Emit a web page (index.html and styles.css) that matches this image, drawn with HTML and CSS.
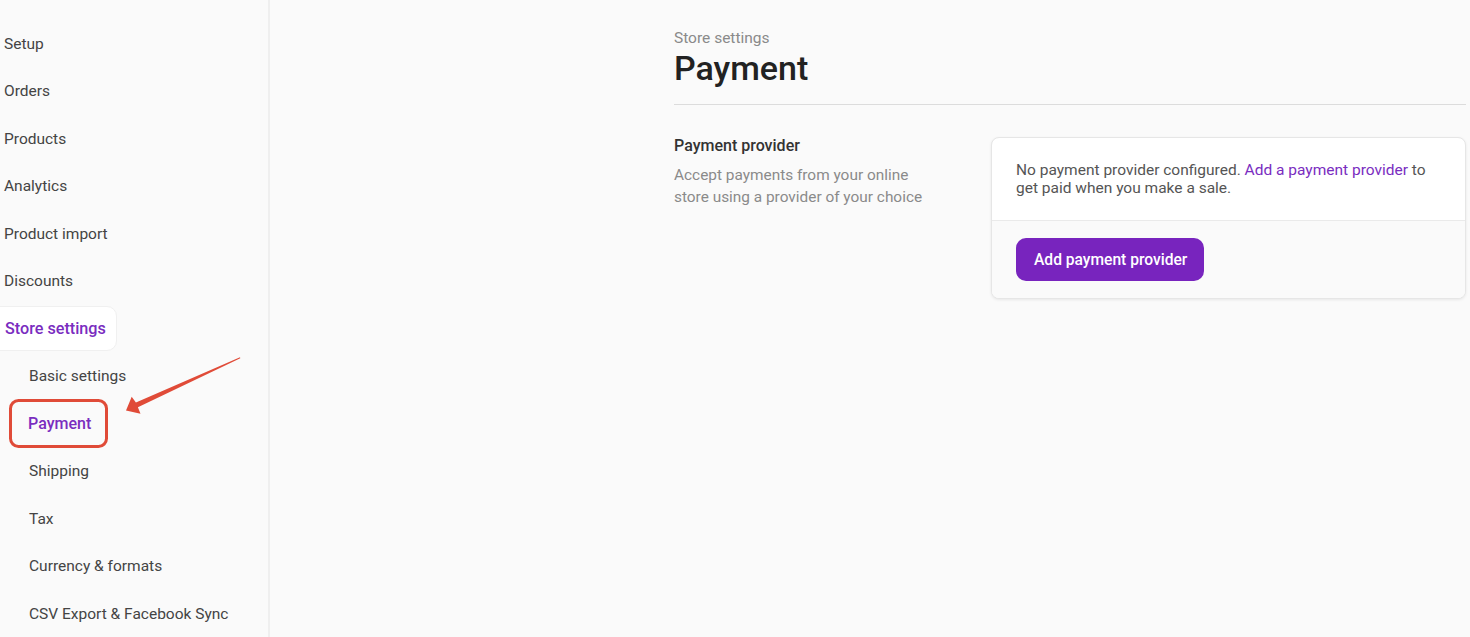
FILE: index.html
```html
<!DOCTYPE html>
<html lang="en">
<head>
<meta charset="utf-8">
<title>Payment - Store settings</title>
<link rel="stylesheet" href="styles.css">
</head>
<body>
<div class="app">
  <aside class="sidebar">
    <nav class="nav">
      <a class="nav-item">Setup</a>
      <a class="nav-item">Orders</a>
      <a class="nav-item">Products</a>
      <a class="nav-item">Analytics</a>
      <a class="nav-item">Product import</a>
      <a class="nav-item">Discounts</a>
      <a class="nav-item nav-item--open"><span class="pill">Store settings</span></a>
      <a class="nav-item nav-sub">Basic settings</a>
      <a class="nav-item nav-sub nav-sub--active">Payment</a>
      <a class="nav-item nav-sub">Shipping</a>
      <a class="nav-item nav-sub">Tax</a>
      <a class="nav-item nav-sub">Currency &amp; formats</a>
      <a class="nav-item nav-sub">CSV Export &amp; Facebook Sync</a>
    </nav>
  </aside>
  <main class="main">
    <div class="content">
      <header class="page-header">
        <div class="breadcrumb">Store settings</div>
        <h1 class="title">Payment</h1>
      </header>
      <section class="section">
        <div class="section-info">
          <h2 class="section-title">Payment provider</h2>
          <p class="section-desc">Accept payments from your online store using a provider of your choice</p>
        </div>
        <div class="card">
          <div class="card-body">
            No payment provider configured. <a class="link">Add a payment provider</a> to get paid when you make a sale.
          </div>
          <div class="card-footer">
            <button class="btn-primary">Add payment provider</button>
          </div>
        </div>
      </section>
    </div>
  </main>
</div>
<svg class="annotation" width="1470" height="637" viewBox="0 0 1470 637" aria-hidden="true">
  <rect x="10.5" y="400.5" width="96" height="46" rx="8" ry="8" fill="none" stroke="#e04b38" stroke-width="3"/>
  <polygon points="240,357.3 135.9,402.6 131.7,396.7 126,410.5 140.5,413.8 137.9,407.3 240.3,358.2" fill="#e04b38"/>
</svg>
</body>
</html>
```

FILE: styles.css
```css
* { box-sizing: border-box; }

html, body {
  margin: 0;
  padding: 0;
  height: 100%;
  overflow: hidden;
}

body {
  font-family: Roboto, "Open Sans", "Liberation Sans", sans-serif;
  background: #fafafa;
  color: #333;
  position: relative;
}

.app {
  display: flex;
  height: 637px;
}

.sidebar {
  width: 270px;
  flex: none;
  border-right: 2px solid #efefef;
  background: #fafafa;
  padding-top: 20px;
}

.nav {
  display: flex;
  flex-direction: column;
}

.nav-item {
  height: 47.5px;
  display: flex;
  align-items: center;
  padding-left: 4px;
  font-size: 15.5px;
  color: #444;
  text-decoration: none;
}

.nav-item--open {
  padding-left: 0;
}

.pill {
  display: flex;
  align-items: center;
  height: 45px;
  margin-left: -12px;
  padding: 0 10px 0 16px;
  background: #fff;
  border: 1px solid #f0f0f0;
  border-radius: 10px;
  color: #7a2dbf;
  font-weight: 500;
  font-size: 16.2px;
}

.nav-sub {
  padding-left: 29px;
}

.nav-sub--active {
  padding-left: 28px;
  color: #7a2dbf;
  font-weight: 500;
  font-size: 16px;
}

.main {
  flex: 1;
  padding-left: 404px;
  padding-right: 4px;
}

.content {
  width: 792px;
}

.page-header {
  padding-top: 29px;
  border-bottom: 1px solid #dcdcdc;
  padding-bottom: 17px;
}

.breadcrumb {
  font-size: 15.5px;
  color: #8a8a8a;
  line-height: 18px;
}

.title {
  margin: 2px 0 0;
  font-size: 34px;
  font-weight: 500;
  line-height: 38px;
  color: #222;
}

.section {
  display: flex;
  padding-top: 32px;
}

.section-info {
  width: 317px;
  flex: none;
  padding-right: 50px;
}

.section-title {
  margin: 0;
  font-size: 16px;
  font-weight: 500;
  line-height: 18px;
  color: #333;
}

.section-desc {
  margin: 9px 0 0;
  font-size: 15.4px;
  line-height: 22px;
  color: #8a8a8a;
}

.card {
  flex: 1;
  background: #fff;
  border: 1px solid #e6e6e6;
  border-radius: 8px;
  box-shadow: 0 1px 3px rgba(0,0,0,0.08);
  overflow: hidden;
}

.card-body {
  padding: 23px 24px 23px;
  font-size: 15.5px;
  line-height: 18px;
  color: #555;
}

.link {
  color: #7a2dbf;
  text-decoration: none;
}

.card-footer {
  border-top: 1px solid #eaeaea;
  background: #fafafa;
  padding: 17px 24px 17px;
}

.btn-primary {
  font-family: inherit;
  height: 43px;
  padding: 0 17px 0 18px;
  border: none;
  border-radius: 10px;
  background: #7824be;
  color: #fff;
  font-size: 15.6px;
  font-weight: 500;
}

.annotation {
  position: absolute;
  left: 0;
  top: 0;
  pointer-events: none;
}
```
